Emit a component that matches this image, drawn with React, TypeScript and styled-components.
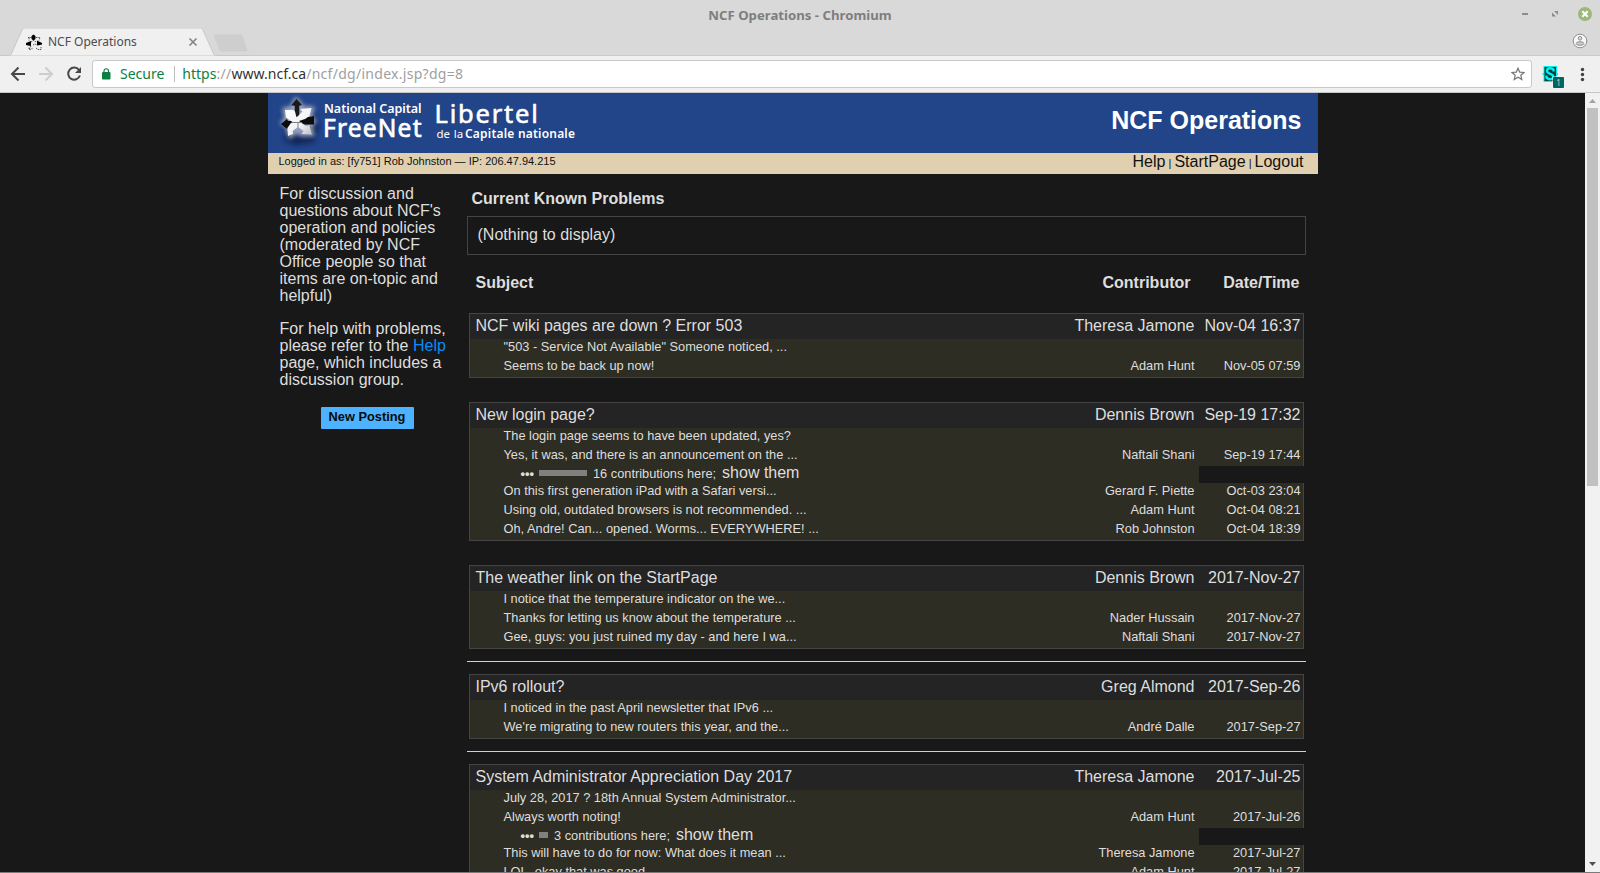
import React from "react";
import styled, { createGlobalStyle } from "styled-components";

const Global = createGlobalStyle`
  * { box-sizing: border-box; }
  html, body { margin: 0; padding: 0; background: #181818; }
  body { overflow: hidden; }
`;

const Window = styled.div`
  width: 1600px;
  height: 873px;
  display: flex;
  flex-direction: column;
  overflow: hidden;
  background: #181818;
  border-bottom: 1px solid #7b7b7b;
  font-family: "Liberation Sans", Arial, sans-serif;
`;

/* ---------- browser frame ---------- */

const TitleBar = styled.div`
  flex: none;
  height: 28px;
  background: #d9d9d9;
  display: grid;
  grid-template-columns: 1fr auto 1fr;
  align-items: center;
  font: bold 13.2px/28px "Noto Sans", sans-serif;
  color: #7e7e7e;
  padding-top: 1px;
`;

const WindowButtons = styled.div`
  grid-column: 3;
  justify-self: end;
  display: flex;
  height: 27px;
`;

const WindowTitle = styled.span`
  grid-column: 2;
  height: 28px;
`;

const TabStrip = styled.div`
  flex: none;
  height: 28px;
  background: #d9d9d9;
  box-shadow: inset 0 -1px #cacaca;
  display: flex;
  justify-content: space-between;
`;

const Tab = styled.div`
  position: relative;
  width: 250px;
  height: 28px;
  display: flex;
  align-items: center;
  padding: 0 52px 0 26px;
  font: 12px/16px "Noto Sans", sans-serif;
  color: #4c4c4c;
  & > *:not(:first-child) { position: relative; }
`;

const TabShape = styled.svg`
  position: absolute;
  left: 0;
  top: 0;
`;

const TabTitle = styled.span`
  flex: 1;
  margin-left: 6px;
`;

const Toolbar = styled.div`
  flex: none;
  height: 37px;
  background: #f0f0f0;
  border-bottom: 1px solid #c6c6c6;
  display: flex;
  align-items: center;
`;

const NavButtons = styled.svg`
  flex: none;
`;

const AddressBar = styled.div`
  width: 1440px;
  height: 28px;
  background: #fff;
  border: 1px solid #c8c8c8;
  border-radius: 3px;
  display: flex;
  align-items: center;
  font: 14px/26px "Noto Sans", sans-serif;
  color: #a0a0a0;
  padding: 0 6px 0 9px;
`;

const Secure = styled.span`
  color: #0b8043;
  margin-left: 9px;
  padding-right: 10px;
  border-right: 1px solid #bdbdbd;
  line-height: 16px;
`;

const Url = styled.span`
  flex: 1;
  margin-left: 7px;
  letter-spacing: 0.28px;
  & > i { font-style: normal; color: #0b8043; letter-spacing: 0; }
  & > b { font-weight: normal; color: #333; letter-spacing: 0.03px; }
`;

/* ---------- page ---------- */

const Viewport = styled.div`
  flex: 1;
  min-height: 0;
  display: flex;
`;

const Page = styled.div`
  flex: 1;
  overflow: hidden;
  padding-left: 268px;
  color: #dedede;
  font-size: 16px;
`;

const Sheet = styled.div`
  width: 1050px;
`;

const Banner = styled.header`
  height: 60px;
  background: #224488;
  display: flex;
  justify-content: space-between;
  padding-right: 16.5px;
`;

const BannerTitle = styled.h1`
  margin: 0;
  font-size: 25px;
  line-height: 54px;
  color: #fff;
`;

const LoginBar = styled.div`
  height: 21px;
  background: #e0d0b0;
  color: #111;
  display: flex;
  justify-content: space-between;
  padding: 0 14.5px 0 10.5px;
  font-size: 11px;
  line-height: 17px;
`;

const Links = styled.nav`
  & > a { font-size: 16px; }
`;

const Columns = styled.div`
  display: flex;
`;

const Sidebar = styled.aside`
  width: 199px;
  padding: 11px 0 0 11.5px;
  line-height: 17px;
  & > p { margin: 0 0 16px; white-space: nowrap; }
  & a { color: #0b8cf4; }
`;

const PostButton = styled.button`
  display: block;
  width: 93px;
  height: 22px;
  margin: 19px 0 0 41.5px;
  padding: 0 1px 4px 0;
  border: 0;
  border-radius: 1px;
  background: #4db2ff;
  color: #0a0a0a;
  font: bold 12.8px "Liberation Sans", Arial, sans-serif;
`;

const Main = styled.main`
  width: 839px;
`;

const SectionTitle = styled.h2`
  margin: 0;
  padding: 15px 0 0 4.5px;
  height: 42px;
  font-size: 16px;
  line-height: 20px;
`;

const EmptyBox = styled.div`
  height: 39px;
  border: 1px solid #444;
  padding-left: 9.5px;
  line-height: 35px;
`;

const HeadRow = styled.div`
  display: grid;
  grid-template-columns: 1fr 140px 109px;
  padding: 19px 6.5px 0 8.5px;
  height: 58px;
  font-weight: bold;
  line-height: 18px;
  text-align: right;
  & > :first-child { text-align: left; }
`;

const Thread = styled.section`
  margin: 0 2px;
  border: 1px solid #444;
  background: #2e2d23;
`;

const Row = styled.div<{ $head?: boolean }>`
  display: grid;
  grid-template-columns: 1fr 200px 106px;
  height: ${(p) => (p.$head ? 25 : 19)}px;
  line-height: ${(p) => (p.$head ? 24 : 15)}px;
  font-size: ${(p) => (p.$head ? 16 : 12.8)}px;
  background: ${(p) => (p.$head ? "#242424" : "transparent")};
  padding: 0 2.5px 0 ${(p) => (p.$head ? 5.5 : 33.5)}px;
  white-space: nowrap;
  text-align: right;
  & > :first-child { text-align: left; }
`;

const SkipRow = styled.div`
  display: flex;
  justify-content: space-between;
  height: 17px;
  margin-right: -1px;
  padding-left: 50.5px;
  font-size: 12.8px;
  line-height: 14px;
`;

const SkipText = styled.div`
  display: flex;
  align-items: baseline;
  white-space: nowrap;
  & > a { font-size: 16px; margin-left: 6px; }
`;

const Dots = styled.b`
  width: 18.5px;
`;

const Bar = styled.span<{ $width: number }>`
  align-self: flex-start;
  width: ${(p) => p.$width}px;
  height: 6px;
  margin: 4px 6px 0 0;
  background: #808080;
`;

const Blank = styled.div`
  width: 105px;
  background: #181818;
`;

const Gap = styled.div`
  height: 24px;
`;

const Rule = styled.hr`
  height: 1px;
  margin: 12px 0;
  border: 0;
  background: #e0d0b0;
`;

const ScrollBar = styled.div`
  width: 15px;
  background: #f1f1f1;
  display: flex;
  flex-direction: column;
  align-items: center;
  justify-content: space-between;
`;

const ScrollTrack = styled.div`
  flex: 1;
`;

const Thumb = styled.div`
  width: 11px;
  height: 378px;
  background: #c1c1c1;
`;

type Entry = { text: string; who?: string; when?: string; bar?: number };
type Topic = { title: string; who: string; when: string; rows: Entry[]; after?: "gap" | "rule" };

const topics: Topic[] = [
  {
    title: "NCF wiki pages are down ? Error 503", who: "Theresa Jamone", when: "Nov-04 16:37", after: "gap",
    rows: [
      { text: '"503 - Service Not Available" Someone noticed, ...' },
      { text: "Seems to be back up now!", who: "Adam Hunt", when: "Nov-05 07:59" },
    ],
  },
  {
    title: "New login page?", who: "Dennis Brown", when: "Sep-19 17:32", after: "gap",
    rows: [
      { text: "The login page seems to have been updated, yes?" },
      { text: "Yes, it was, and there is an announcement on the ...", who: "Naftali Shani", when: "Sep-19 17:44" },
      { text: "16 contributions here;", bar: 48 },
      { text: "On this first generation iPad with a Safari versi...", who: "Gerard F. Piette", when: "Oct-03 23:04" },
      { text: "Using old, outdated browsers is not recommended. ...", who: "Adam Hunt", when: "Oct-04 08:21" },
      { text: "Oh, Andre! Can... opened. Worms... EVERYWHERE! ...", who: "Rob Johnston", when: "Oct-04 18:39" },
    ],
  },
  {
    title: "The weather link on the StartPage", who: "Dennis Brown", when: "2017-Nov-27", after: "rule",
    rows: [
      { text: "I notice that the temperature indicator on the we..." },
      { text: "Thanks for letting us know about the temperature ...", who: "Nader Hussain", when: "2017-Nov-27" },
      { text: "Gee, guys: you just ruined my day - and here I wa...", who: "Naftali Shani", when: "2017-Nov-27" },
    ],
  },
  {
    title: "IPv6 rollout?", who: "Greg Almond", when: "2017-Sep-26", after: "rule",
    rows: [
      { text: "I noticed in the past April newsletter that IPv6 ..." },
      { text: "We're migrating to new routers this year, and the...", who: "André Dalle", when: "2017-Sep-27" },
    ],
  },
  {
    title: "System Administrator Appreciation Day 2017", who: "Theresa Jamone", when: "2017-Jul-25",
    rows: [
      { text: "July 28, 2017 ? 18th Annual System Administrator..." },
      { text: "Always worth noting!", who: "Adam Hunt", when: "2017-Jul-26" },
      { text: "3 contributions here;", bar: 9 },
      { text: "This will have to do for now: What does it mean ...", who: "Theresa Jamone", when: "2017-Jul-27" },
      { text: "LOL, okay that was good.", who: "Adam Hunt", when: "2017-Jul-27" },
    ],
  },
];

const Logo = () => (
  <svg width="320" height="60" viewBox="268 93 320 60">
    <defs>
      <filter id="glow" x="-40%" y="-40%" width="180%" height="180%">
        <feGaussianBlur stdDeviation="2" />
      </filter>
      <linearGradient id="steel" x1="0" y1="0" x2="1" y2="1">
        <stop offset="0" stopColor="#fff" />
        <stop offset="0.6" stopColor="#f2f2f4" />
        <stop offset="1" stopColor="#b4b8c2" />
      </linearGradient>
    </defs>
    <path d="M303 106l12 7 4 13-5 16-17 3-12-4-1-22z" fill="#0b1c48" opacity=".75" filter="url(#glow)" />
    <path d="M296 99l7 8 10 1-2 8 4 5-4 6 2 8-12 0-4-3-7 5-3-7 1-3-6-4 4-6-2-8 7-1z" fill="#d5def2" stroke="#d5def2" strokeWidth="3" opacity=".65" filter="url(#glow)" />
    <path d="M296.500 98.500l6 6.500-3 1v11h-5v-11l-4-.5z" fill="#1a1a1c" stroke="#8a8e98" strokeWidth=".6" />
    <path d="M281 124l6-5 1 2h8v6h-8l-1 2zM314 116v8.500h-11l-6-3 6-4.500h6z" fill="#0c0c0c" />
    <path d="M284.500 110h9l1.500 1.500 1.500 6 6-6-2.500-2.500 11.500-1-2 8-4.500 3-6 2 7 5 4-1 2.500 9.500-11-.5 2-3-5.500-4-5.500 4 1 3.500-5.500 1.500-.5-8 3-4.500 2-1.500-6-4-1.500 1.500z" fill="url(#steel)" />
    <path d="M284.500 110l1 9.500 1.500-1.500M292 122.500h10M289 136l5.500-2M312.500 134.500l-2.500-9M298 122.500v5" fill="none" stroke="#70747c" strokeWidth=".9" />
    <g fill="#fff" fontFamily='"Noto Sans", sans-serif' lengthAdjust="spacingAndGlyphs">
      <text x="324" y="113.300" fontSize="12.500" fontWeight="600" textLength="97.500">National Capital</text>
      <text x="323" y="137.300" fontSize="24.500" stroke="#fff" strokeWidth=".7" textLength="98.500">FreeNet</text>
      <text x="434.500" y="123" fontSize="25.500" stroke="#fff" strokeWidth=".6" letterSpacing="1.800">Libertel</text>
      <text x="436.500" y="138" fontSize="11.500" wordSpacing="0.800">de la</text>
      <text x="465" y="138" fontSize="12" fontWeight="600" textLength="110">Capitale nationale</text>
    </g>
  </svg>
);

const Favicon = () => (
  <svg width="16" height="16" viewBox="0 0 16 16">
    <path d="M7.500 0.500l2 1.500v3l-2 1.500-2-1.500v-3zM0 9l2.500-1 2.500-1v5l-3-.5-2-.5zM16 9l-2-1-3-1.500v5l3-.5 2-.5z" fill="#000" />
    <path d="M2 3.500h3.500M3 3.500v3M10 3.500h4l-1 3M5 8l2.500-1.500 3 1.500M5 12l-1.500 3M7 11l2-1 2 1M10 14l2 1.500h3v-2.500M3 13.500v2h2l2-2" fill="none" stroke="#333" strokeWidth=".8" strokeDasharray="1.500 .7" />
  </svg>
);

function ThreadView({ topic }: { topic: Topic }) {
  return (
    <>
      <Thread>
        <Row $head>
          <span>{topic.title}</span><span>{topic.who}</span><span>{topic.when}</span>
        </Row>
        {topic.rows.map((r) =>
          r.bar ? (
            <SkipRow key={r.text}>
              <SkipText>
                <Dots>•••</Dots><Bar $width={r.bar} /><span>{r.text}</span><a>show them</a>
              </SkipText>
              <Blank />
            </SkipRow>
          ) : (
            <Row key={r.text}>
              <span>{r.text}</span><span>{r.who}</span><span>{r.when}</span>
            </Row>
          )
        )}
      </Thread>
      {topic.after === "gap" && <Gap />}
      {topic.after === "rule" && <Rule />}
    </>
  );
}

export default function App() {
  return (
    <Window>
      <Global />
      <TitleBar>
        <WindowTitle>NCF Operations - Chromium</WindowTitle>
        <WindowButtons>
          <svg width="90" height="27" viewBox="1510 1 90 27">
            <path d="M1522 12h6v2h-6z" fill="#8d8d8d" />
            <path d="M1554 10h4v4zM1552 11.500v4h4z" fill="#8d8d8d" />
            <circle cx="1585" cy="13" r="7" fill="#9ab87c" />
            <path d="M1582.300 10.300l5.400 5.400m0-5.400l-5.400 5.400" stroke="#fff" strokeWidth="2" />
          </svg>
        </WindowButtons>
      </TitleBar>
      <TabStrip>
        <Tab>
          <TabShape width="250" height="28" viewBox="0 28 250 28">
            <path d="M214 62.500h26q2 0 3 2l4 13q.5 2-1 2h-24q-2 0-3-2l-5-13q0-2 0-2z" transform="translate(0 -28)" fill="#cecece" />
            <path d="M0 56v-.5h9.500q1 0 1.500-1L22.500 29q.5-1 2-1h176q1.500 0 2 1L214 54.500q.5 1 1.500 1H250V56z" fill="#f0f0f0" stroke="#c8c8c8" />
          </TabShape>
          <Favicon />
          <TabTitle>NCF Operations</TabTitle>
          <svg width="10" height="10" viewBox="0 0 10 10">
            <path d="M1.500 1.500l7 7m0-7l-7 7" stroke="#858585" strokeWidth="1.700" />
          </svg>
        </Tab>
        <svg width="30" height="27" viewBox="1570 28 30 27">
          <circle cx="1580" cy="41" r="6.800" fill="#f8f8f8" stroke="#8d8d8d" />
          <circle cx="1580" cy="38.300" r="1.800" fill="#ddd" stroke="#8d8d8d" />
          <ellipse cx="1580" cy="43.500" rx="3.800" ry="1.800" fill="#ccc" stroke="#8d8d8d" />
        </svg>
      </TabStrip>
      <Toolbar>
        <NavButtons width="92" height="36" viewBox="0 56 92 36">
          <path d="M25 74H12.500M18.500 67.500L12 74l6.500 6.500" fill="none" stroke="#484848" strokeWidth="2" />
          <path d="M39 74h12.500M45.500 67.500L52 74l-6.500 6.500" fill="none" stroke="#cdcdcd" strokeWidth="2" />
          <path d="M79 70a6 6 0 1 0 .9 5.500" fill="none" stroke="#484848" strokeWidth="2" />
          <path d="M81 67v6h-6z" fill="#484848" />
        </NavButtons>
        <AddressBar>
          <svg width="9" height="12" viewBox="0 0 9 12">
            <rect x="0" y="4" width="8.500" height="7.500" rx="1" fill="#0b8043" />
            <path d="M2 5V3a2.200 2.200 0 0 1 4.500 0v2" fill="none" stroke="#0b8043" strokeWidth="1.200" />
          </svg>
          <Secure>Secure</Secure>
          <Url><i>https</i>://<b>www.ncf.ca</b>/ncf/dg/index.jsp?dg=8</Url>
          <svg width="14" height="14" viewBox="0 0 14 14">
            <path d="M7 1.200l1.700 3.900 4.300.4-3.200 2.800 1 4.200L7 10.300 3.200 12.500l1-4.200L1 5.500l4.300-.4z" fill="none" stroke="#757575" strokeWidth="1.200" />
          </svg>
        </AddressBar>
        <svg width="68" height="36" viewBox="1532 56 68 36">
          <path d="M1543.500 66h13.500v7h1v2h-1v7h-13.500v-7h-1v-2h1z" fill="#00f2ee" />
          <path d="M1544.500 67h11.500v14h-11.500z" fill="#073c3b" />
          <path d="M1553.500 71.500v-2q-1.500-1.300-3.300-1.300-3.200 0-3.200 2.600 0 2.200 3.200 3 3 .8 3 2.900 0 2.500-3 2.500-2.200 0-3.700-1.500V75.500" fill="none" stroke="#00f2ee" strokeWidth="2.400" />
          <rect x="1552.500" y="76.500" width="12" height="12" rx="1" fill="#f0f0f0" />
          <rect x="1553" y="77" width="11" height="11" rx="1" fill="#006566" />
          <text x="1556.300" y="85.500" fontSize="8" fill="#d8d4a8" fontFamily="Noto Sans, sans-serif">1</text>
          <g fill="#404040"><circle cx="1582.500" cy="69.500" r="1.700" /><circle cx="1582.500" cy="74.500" r="1.700" /><circle cx="1582.500" cy="79.500" r="1.700" /></g>
        </svg>
      </Toolbar>
      <Viewport>
        <Page>
          <Sheet>
            <Banner>
              <Logo />
              <BannerTitle>NCF Operations</BannerTitle>
            </Banner>
            <LoginBar>
              <span>Logged in as: [fy751] Rob Johnston — IP: 206.47.94.215</span>
              <Links><a>Help</a> | <a>StartPage</a> | <a>Logout</a></Links>
            </LoginBar>
            <Columns>
              <Sidebar>
                <p>For discussion and<br />questions about NCF's<br />operation and policies<br />(moderated by NCF<br />Office people so that<br />items are on-topic and<br />helpful)</p>
                <p>For help with problems,<br />please refer to the <a>Help</a><br />page, which includes a<br />discussion group.</p>
                <PostButton>New Posting</PostButton>
              </Sidebar>
              <Main>
                <SectionTitle>Current Known Problems</SectionTitle>
                <EmptyBox>(Nothing to display)</EmptyBox>
                <HeadRow><span>Subject</span><span>Contributor</span><span>Date/Time</span></HeadRow>
                {topics.map((t) => <ThreadView key={t.title} topic={t} />)}
              </Main>
            </Columns>
          </Sheet>
        </Page>
        <ScrollBar>
          <svg width="15" height="15" viewBox="0 0 15 15"><path d="M7.500 6l3.500 4H4z" fill="#a3a3a3" /></svg>
          <ScrollTrack><Thumb /></ScrollTrack>
          <svg width="15" height="15" viewBox="0 0 15 15"><path d="M4 5h7L7.500 9z" fill="#505050" /></svg>
        </ScrollBar>
      </Viewport>
    </Window>
  );
}
